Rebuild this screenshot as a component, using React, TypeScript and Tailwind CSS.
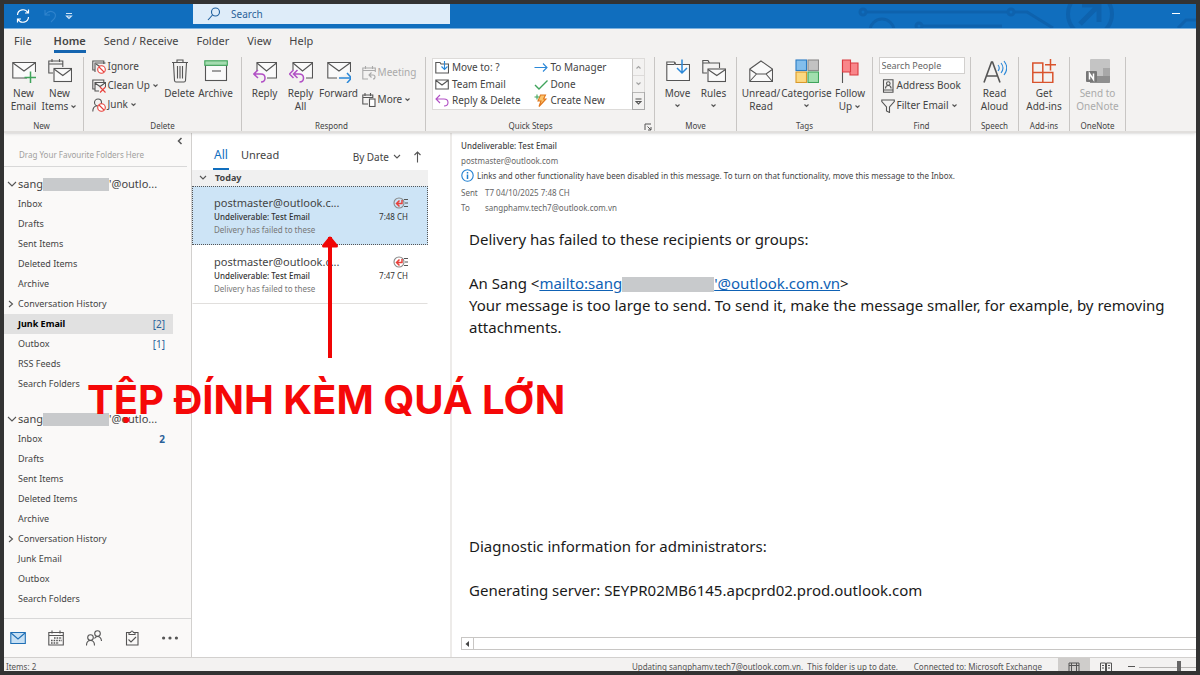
import type { ReactNode } from 'react';

function Svg({ w = 24, h = 24, children, className = '' }: { w?: number; h?: number; children: ReactNode; className?: string }) {
  return (
    <svg width={w} height={h} viewBox={`0 0 ${w} ${h}`} fill="none" stroke="#555" strokeWidth="1.1" className={`shrink-0 ${className}`} aria-hidden="true">
      {children}
    </svg>
  );
}

function Chevron({ className = '' }: { className?: string }) {
  return (
    <Svg w={7} h={6} className={className}>
      <path d="M1.500 1.500l2 2 2-2" />
    </Svg>
  );
}

const purple = '#b14fc5';
const blue = '#2b88d8';
const red = '#e8403a';
const green = '#3fa45b';

const icons = {
  newEmail: (
    <Svg>
      <path d="M15 19H.8V3.500h22.700V13" fill="#fafafa" />
      <path d="M1 4l11 8 11-8" />
      <path d="M18.500 12.500v12M12.500 18.500h12" stroke={green} strokeWidth="1.500" />
    </Svg>
  ),
  newItems: (
    <Svg>
      <path d="M5 14H.8V2h14v6M.8 5h14M4 0v3M11.500 0v3" />
      <rect x="6" y="9.500" width="17.500" height="13" fill="#fafafa" />
      <path d="M6 10l8.800 6.500 8.700-6.500" />
    </Svg>
  ),
  trash: (
    <Svg>
      <path d="M4 3.500h16M9 3.500V1h6v2.500M5.500 4l1 17.500q.2 1.500 1.500 1.500h8q1.300 0 1.500-1.500l1-17.500M9.500 7v12.500M12 7v12.500M14.500 7v12.500" />
    </Svg>
  ),
  archive: (
    <Svg>
      <rect x="1.500" y="6" width="21" height="15.500" fill="#fafafa" />
      <rect x=".8" y="1.800" width="22.500" height="4.500" fill="#a5dcb0" stroke={green} />
      <path d="M8 12h9" />
    </Svg>
  ),
  reply: (
    <Svg>
      <path d="M4 12V3.500h19.500V19H14" fill="#fafafa" />
      <path d="M4 4l9.500 8 10-8" />
      <path d="M5 11 .8 15 5 19M1 15h7q4 0 4 4t-4 4" stroke={purple} strokeWidth="1.500" />
    </Svg>
  ),
  replyAll: (
    <Svg>
      <path d="M4 11V3.500h19.500V19H17" fill="#fafafa" />
      <path d="M4 4l9.500 8 10-8" />
      <path d="M4.500 11 .5 15l4 4M8.500 11l-4 4 4 4M5 15h5q4.500 0 4.500 4t-4 4" stroke={purple} strokeWidth="1.500" />
    </Svg>
  ),
  forward: (
    <Svg>
      <path d="M10 19H.8V3.500h22.700V13" fill="#fafafa" />
      <path d="M1 4l11 8 11-8" />
      <path d="M12 19h12M20 14l4.500 5-4.500 5" stroke={blue} strokeWidth="1.500" />
    </Svg>
  ),
  move: (
    <Svg>
      <path d="M.8 21.500V3h7.500l1.500 2.500h13.700v16z" fill="#fafafa" />
      <path d="M1 5.500h7l1.500-2" />
      <path d="M16 .5v13M11 9l5 5 5-5" stroke={blue} strokeWidth="1.500" />
    </Svg>
  ),
  rules: (
    <Svg>
      <path d="M5 14H.8V1.500H6L7.500 4h10v5M1 4h6.500" />
      <rect x="6" y="10" width="17.500" height="12.500" fill="#fafafa" />
      <path d="M6 10.500l8.800 6 8.700-6" />
    </Svg>
  ),
  unread: (
    <Svg>
      <path d="M.8 10 12 2l11.500 8v12.500H.8z" fill="#fafafa" />
      <path d="M1 10.500 7.500 15h9.500l6.300-4.500M1 22l6.500-7M23 22l-6-7" />
    </Svg>
  ),
  categorise: (
    <Svg>
      <rect x="1" y="1" width="10.500" height="10.500" fill="#83beec" stroke="#2b7cc4" />
      <rect x="13" y="1" width="10.500" height="10.500" fill="#c2c2c2" stroke="#8b8b8b" />
      <rect x="1" y="13" width="10.500" height="10.500" fill="#fcd981" stroke="#d99a2b" />
      <rect x="13" y="13" width="10.500" height="10.500" fill="#a1dfae" stroke={green} />
    </Svg>
  ),
  flag: (
    <Svg>
      <path d="M4.500 1v23" />
      <path d="M4.500 1h8v3h7.500v12h-8v-3H4.500z" fill="#f9868a" stroke="#d93a40" />
      <path d="M12.500 4v9" stroke="#d93a40" />
    </Svg>
  ),
  readAloud: (
    <Svg>
      <path d="M1 23.500 8.500 3h1L17 23.500M4 17h10" strokeWidth="1.600" />
      <path d="M15 6q2.500 3 0 6M18 4q4 5 0 10M21 2q5.500 7 0 14" stroke={blue} />
    </Svg>
  ),
  addins: (
    <Svg>
      <path d="M.8 4h10v19.500H.8zM.8 13.500h20v10H.8M10.800 13.500v10" stroke="#d9532c" strokeWidth="1.500" />
      <path d="M18.500 0v11.500M13 5.800h11" stroke="#d9532c" strokeWidth="1.500" />
    </Svg>
  ),
  oneNote: (
    <Svg>
      <rect x="4" y="0" width="20" height="24" rx="1" fill="#c4c4c4" stroke="none" />
      <path d="M17 9h7v8h-7z" fill="#a8a8a8" stroke="none" />
      <path d="M4 17h20v6q0 1-1 1H4z" fill="#8f8f8f" stroke="none" />
      <rect x="0" y="12" width="11" height="11" rx="1" fill="#777" stroke="none" />
      <path d="M3.500 20.500v-6l4 6v-6" stroke="#fff" strokeWidth="1.500" />
    </Svg>
  ),
  ignore: (
    <Svg w={14} h={14}>
      <path d="M3 10H.8V1h11v3M3 12V3h10.500" />
      <path d="M4 4l4.500 3" />
      <circle cx="9.500" cy="9.500" r="3.800" fill="#fff" stroke={red} />
      <path d="M7 7l5 5" stroke={red} />
    </Svg>
  ),
  cleanUp: (
    <Svg w={14} h={14}>
      <path d="M3 10H.8V1h11v2M7 12H3V3.500h10.500V8M3 4l5 3.500L13 4" />
      <path d="M8 8l5.500 5.500M13.500 8 8 13.500" stroke={red} />
    </Svg>
  ),
  junk: (
    <Svg w={14} h={14}>
      <circle cx="6" cy="4.500" r="3.500" />
      <path d="M.8 13.500q0-5 4-5.700" />
      <circle cx="9.500" cy="9.500" r="3.800" fill="#fff" stroke={red} />
      <path d="M7 7l5 5" stroke={red} />
    </Svg>
  ),
  meeting: (
    <Svg w={14} h={14}>
      <g stroke="#aaa">
        <path d="M6 13H.8V2h12.500v4M.8 4.500h12.500M3.500 0v3M10.500 0v3" />
        <path d="M9.500 6.500 7 9l2.500 2.500M7 9h4q2 0 2 2t-2 2" />
      </g>
    </Svg>
  ),
  more: (
    <Svg w={14} h={14}>
      <path d="M6 11H.8V2h10v3M.8 4.500h10M3 0v3M8.500 0v3" />
      <rect x="7.500" y="6" width="5.500" height="7.500" fill="#fff" />
    </Svg>
  ),
  moveTo: (
    <Svg w={14} h={13}>
      <path d="M.8 12V1.500H5L6 3h7.500v9z" />
      <path d="M9.500 0v8M6.500 5.500l3 3 3-3" stroke={blue} />
    </Svg>
  ),
  envelope: (
    <Svg w={14} h={13}>
      <path d="M.8 2h12.500v9H.8zM1 2.500 7 7l6-4.500" />
    </Svg>
  ),
  replyDelete: (
    <Svg w={14} h={13}>
      <path d="M5 1 1 5l4 4M1 5h8q4 0 4 3.500T9 12" stroke={purple} />
    </Svg>
  ),
  arrowRight: (
    <Svg w={14} h={13}>
      <path d="M.5 6.500h12.500M9 2.500l4 4-4 4" stroke={blue} />
    </Svg>
  ),
  check: (
    <Svg w={14} h={13}>
      <path d="M1 7l4 4 8.500-8.500" stroke={green} strokeWidth="1.400" />
    </Svg>
  ),
  bolt: (
    <Svg w={14} h={13}>
      <path d="M6.500 1h5L9.500 5H12l-7 7.500 2-5.500H4z" fill="#fcc46b" stroke="#e0761c" />
      <path d="M3 .5v5M.5 3h5" stroke={green} />
    </Svg>
  ),
  addressBook: (
    <Svg w={14} h={14}>
      <path d="M2.500.8h9.500v12.500h-9.500zM2.500 11h9.500" />
      <circle cx="7.300" cy="4.500" r="1.800" />
      <path d="M4.500 9.500q0-3 2.800-3t2.800 3" />
    </Svg>
  ),
  filter: (
    <Svg w={14} h={14}>
      <path d="M.8 1h12.500v1.500L8.500 8v5.500L5.500 12V8L.8 2.500z" />
    </Svg>
  ),
};

function BigButton({ icon, label, second, caret, width, disabled }: { icon: ReactNode; label: string; second?: string; caret?: boolean; width: string; disabled?: boolean }) {
  return (
    <button type="button" disabled={disabled} className={`${width} flex shrink-0 flex-col items-center whitespace-nowrap pt-[2px] leading-[13px] disabled:text-[#aaa]`}>
      <span className="mb-1">{icon}</span>
      <span>{label}</span>
      <span className="flex min-h-3 items-center gap-[2px]">
        {second}
        {caret && <Chevron />}
      </span>
    </button>
  );
}

function SmallButton({ icon, label, caret, disabled }: { icon: ReactNode; label: string; caret?: boolean; disabled?: boolean }) {
  return (
    <button type="button" disabled={disabled} className="flex h-[19px] items-center gap-[2px] whitespace-nowrap disabled:text-[#aaa]">
      {icon}
      {label}
      {caret && <Chevron />}
    </button>
  );
}

function Group({ name, width, children, launcher }: { name: string; width: string; children: ReactNode; launcher?: boolean }) {
  return (
    <section aria-label={name} className={`${width} relative flex shrink-0 flex-col border-r border-[#c8c6c4]`}>
      <div className="flex flex-1 justify-center">{children}</div>
      <div className={`text-center text-[8px] leading-[10px] ${launcher ? 'pr-4' : ''}`}>{name}</div>
      {launcher && (
        <button type="button" aria-label="Manage quick steps" className="absolute bottom-0 right-[2px]">
          <Svg w={8} h={8}>
            <path d="M1 7V1h6M3.500 3.500 7 7M7 4v3H4" strokeWidth="1" />
          </Svg>
        </button>
      )}
    </section>
  );
}

function TitleBar() {
  return (
    <header className="relative flex h-[25px] border-b border-[#7db4e3] bg-[#106ebe]">
      <div className="flex w-[189px] items-center pl-3">
        <button type="button" aria-label="Send/Receive all folders">
          <Svg w={14} h={14}>
            <path d="M1.500 6a5.500 5.500 0 0 1 10.500-2M12.500.5V4H9M12.500 8a5.500 5.500 0 0 1-10.500 2M1.500 13.500V10H5" stroke="#fff" strokeWidth="1.200" />
          </Svg>
        </button>
        <button type="button" aria-label="Undo" className="ml-[13px]">
          <Svg w={14} h={14}>
            <path d="M2 1v5h5M2 6q4-5 8-3t1.500 6.500L8 13" stroke="#2f83cc" />
          </Svg>
        </button>
        <button type="button" aria-label="Customise toolbar" className="ml-2">
          <Svg w={8} h={8}>
            <path d="M1 1.500h6M1.500 4 4 6.500 6.500 4z" stroke="#cfe3f5" />
          </Svg>
        </button>
      </div>
      <label className="flex h-5 w-[257px] items-center gap-[10px] bg-[#deecf9] pl-[14px] text-[#1f5f9e]">
        <Svg w={14} h={14}>
          <circle cx="8.500" cy="5" r="4" stroke="#1f5f9e" />
          <path d="M5.500 8 1 13" stroke="#1f5f9e" />
        </Svg>
        <input type="text" aria-label="Search" placeholder="Search" className="w-40 bg-transparent text-[10px] outline-none placeholder:text-[#2b6299]" />
      </label>
      <div className="flex flex-1 justify-end overflow-hidden">
        <Svg w={340} h={24}>
          <g stroke="#0e62ad" strokeWidth="3">
            <path d="M10 8h142M158 8h13l26 16M66 22h80" />
            <circle cx="7" cy="8" r="3" />
            <circle cx="155" cy="8" r="3" />
            <circle cx="63" cy="22" r="3" />
            <circle cx="26" cy="27" r="12" />
            <circle cx="234" cy="10" r="22" strokeWidth="4" />
            <path d="M224 20l18-18M226 1h17v17" strokeWidth="5" />
            <path d="M322 24l8-8h12" />
          </g>
        </Svg>
      </div>
      <button type="button" aria-label="Minimise" className="absolute right-4 top-[9px] h-px w-2 bg-white" />
    </header>
  );
}

const menu = ['File', 'Home', 'Send / Receive', 'Folder', 'View', 'Help'];

const quickSteps = [
  { icon: icons.moveTo, label: 'Move to: ?' },
  { icon: icons.arrowRight, label: 'To Manager' },
  { icon: icons.envelope, label: 'Team Email' },
  { icon: icons.check, label: 'Done' },
  { icon: icons.replyDelete, label: 'Reply & Delete' },
  { icon: icons.bolt, label: 'Create New' },
];

function Ribbon() {
  return (
    <div className="relative border-b-2 border-[#e1dfdd] bg-[#f3f2f1] shadow-sm">
      <nav className="flex h-6 gap-[18px] overflow-hidden pl-[10px] pt-1 text-[11px] leading-4">
        {menu.map((item) => (
          <a key={item} href={`#${item}`} className={item === 'Home' ? 'ml-1 border-b-[3px] border-[#1565b0] font-semibold' : ''}>
            {item}
          </a>
        ))}
      </nav>
      <div className="mt-1 flex h-[74px] overflow-hidden text-[10px]">
        <Group name="New" width="w-[80px] pr-1">
          <BigButton icon={icons.newEmail} label="New" second="Email" width="w-9" />
          <BigButton icon={icons.newItems} label="New" second="Items" caret width="w-9" />
        </Group>
        <Group name="Delete" width="w-[158px]">
          <div className="w-[70px]">
            <SmallButton icon={icons.ignore} label="Ignore" />
            <SmallButton icon={icons.cleanUp} label="Clean Up" caret />
            <SmallButton icon={icons.junk} label="Junk" caret />
          </div>
          <BigButton icon={icons.trash} label="Delete" width="w-9" />
          <BigButton icon={icons.archive} label="Archive" width="w-9" />
        </Group>
        <Group name="Respond" width="w-[184px] pr-1">
          <BigButton icon={icons.reply} label="Reply" width="w-9" />
          <BigButton icon={icons.replyAll} label="Reply" second="All" width="w-9" />
          <BigButton icon={icons.forward} label="Forward" width="w-10" />
          <div className="flex flex-col gap-2 pl-[3px] pt-[6px]">
            <SmallButton icon={icons.meeting} label="Meeting" disabled />
            <SmallButton icon={icons.more} label="More" caret />
          </div>
        </Group>
        <Group name="Quick Steps" width="w-[229px] pr-[3px]" launcher>
          <div className="mt-px flex h-[52px] border border-[#dddbd9] bg-white">
            <div className="grid w-[199px] grid-cols-2 pl-[2px]">
              {quickSteps.map((step) => (
                <button key={step.label} type="button" className="flex h-4 items-center gap-[3px] whitespace-nowrap pt-px">
                  {step.icon}
                  {step.label}
                </button>
              ))}
            </div>
            <div className="flex w-3 flex-col divide-y divide-[#c8c6c4] border-l border-[#c8c6c4] bg-[#f3f2f1]">
              <button type="button" aria-label="Previous row" className="flex flex-1 items-center justify-center opacity-50">
                <Chevron className="rotate-180" />
              </button>
              <button type="button" aria-label="Next row" className="flex flex-1 items-center justify-center opacity-50">
                <Chevron />
              </button>
              <button type="button" aria-label="More steps" className="flex flex-1 items-center justify-center outline outline-[#aaa]">
                <Svg w={7} h={7}>
                  <path d="M.5 1h6M1 3.500h5L3.500 6z" />
                </Svg>
              </button>
            </div>
          </div>
        </Group>
        <Group name="Move" width="w-[82px]">
          <BigButton icon={icons.move} label="Move" caret width="w-9" />
          <BigButton icon={icons.rules} label="Rules" caret width="w-9" />
        </Group>
        <Group name="Tags" width="w-[136px]">
          <BigButton icon={icons.unread} label="Unread/" second="Read" width="w-10" />
          <BigButton icon={icons.categorise} label="Categorise" caret width="w-[51px]" />
          <BigButton icon={icons.flag} label="Follow" second="Up" caret width="w-9" />
        </Group>
        <Group name="Find" width="w-[98px]">
          <div className="flex w-[86px] flex-col">
            <input type="text" aria-label="Search People" placeholder="Search People" className="h-[17px] w-full border border-[#d2d0ce] bg-white px-[2px] text-[9px] placeholder:text-[#666]" />
            <div className="flex flex-col gap-px pl-[2px] pt-[2px]">
              <SmallButton icon={icons.addressBook} label="Address Book" />
              <SmallButton icon={icons.filter} label="Filter Email" caret />
            </div>
          </div>
        </Group>
        <Group name="Speech" width="w-12">
          <BigButton icon={icons.readAloud} label="Read" second="Aloud" width="w-10" />
        </Group>
        <Group name="Add-ins" width="w-[51px]">
          <BigButton icon={icons.addins} label="Get" second="Add-ins" width="w-10" />
        </Group>
        <Group name="OneNote" width="w-[56px]">
          <BigButton icon={icons.oneNote} label="Send to" second="OneNote" width="w-10" disabled />
        </Group>
      </div>
    </div>
  );
}

interface Folder {
  name: string;
  count?: string;
  active?: boolean;
}

const firstAccount: Folder[] = [
  { name: 'Inbox' },
  { name: 'Drafts' },
  { name: 'Sent Items' },
  { name: 'Deleted Items' },
  { name: 'Archive' },
  { name: 'Conversation History' },
  { name: 'Junk Email', count: '[2]', active: true },
  { name: 'Outbox', count: '[1]' },
  { name: 'RSS Feeds' },
  { name: 'Search Folders' },
];

const secondAccount: Folder[] = [
  { name: 'Inbox', count: '2' },
  { name: 'Drafts' },
  { name: 'Sent Items' },
  { name: 'Deleted Items' },
  { name: 'Archive' },
  { name: 'Conversation History' },
  { name: 'Junk Email' },
  { name: 'Outbox' },
  { name: 'Search Folders' },
];

function Account({ folders, hint }: { folders: Folder[]; hint: string }) {
  return (
    <section>
      <button type="button" className="flex h-5 w-full items-center pl-[3px] text-[11px]">
        <Svg w={10} h={8} className="mr-px">
          <path d="M1 2l4 4 4-4" />
        </Svg>
        sang
        <span className="h-[13px] w-[66px] bg-[#c8cacc]" />
        {hint}@outlo...
      </button>
      <ul>
        {folders.map((folder) => (
          <li key={folder.name}>
            <a
              href={`#${folder.name}`}
              className={`mr-[18px] flex h-5 items-center pr-2 ${folder.active ? 'bg-[#e1e1e1] font-bold text-black' : ''}`}
            >
              <span className="flex w-[14px] shrink-0 justify-center pr-px">
                {folder.name === 'Conversation History' && (
                  <Svg w={6} h={8}>
                    <path d="M1 1l3.500 3L1 7" />
                  </Svg>
                )}
              </span>
              {folder.name}
              {folder.count && (
                <span className={`ml-auto text-[10px] text-[#2b6299] ${folder.count === '2' ? 'font-bold' : 'font-normal'}`}>{folder.count}</span>
              )}
            </a>
          </li>
        ))}
      </ul>
    </section>
  );
}

function Sidebar() {
  return (
    <aside className="flex w-[188px] shrink-0 flex-col border-r border-[#d2d0ce] bg-[#faf9f8] text-[9px]">
      <div className="relative mr-1 border-b border-[#d8d8d8] px-[15px] pb-1 pt-[15px] text-[8px] leading-[14px] text-[#a19f9d]">
        <button type="button" aria-label="Minimise the folder pane" className="absolute right-1 top-1">
          <Svg w={6} h={8}>
            <path d="M4.500 1 1.500 4l3 3" strokeWidth="1.500" />
          </Svg>
        </button>
        <span className="whitespace-nowrap">Drag Your Favourite Folders Here</span>
      </div>
      <div className="flex flex-col gap-[15px] pt-[7px]">
        <Account folders={firstAccount} hint="'" />
        <Account folders={secondAccount} hint="'" />
      </div>
      <nav className="mt-auto flex h-[39px] items-center gap-[22px] border-t border-[#d8d8d8] pl-[6px]">
        <a href="#mail" aria-label="Mail">
          <Svg w={16} h={16}>
            <path d="M.8 2.500h14.500v11H.8z" fill="#c7e0f4" stroke="#1f6fb5" />
            <path d="M1 3 8 9l7-6" stroke="#1f6fb5" />
          </Svg>
        </a>
        <a href="#calendar" aria-label="Calendar">
          <Svg w={16} h={16}>
            <path d="M.8 2.500h14.500v12.500H.8zM.8 5.500h14.500M4 .5v3M12 .5v3" />
            <path d="M6 8h8M3 10.500h11M3 13h8" strokeWidth="1.600" strokeDasharray="1.600 1" />
          </Svg>
        </a>
        <a href="#people" aria-label="People">
          <Svg w={16} h={16}>
            <circle cx="4.500" cy="7.500" r="2.800" />
            <circle cx="11.500" cy="3.500" r="2.800" />
            <path d="M.5 15.500q0-5 4-5t4 5M8.500 8.500q1-2 3-2 3.500 0 4 4.500" />
          </Svg>
        </a>
        <a href="#tasks" aria-label="Tasks">
          <Svg w={16} h={16}>
            <path d="M5 2.500H2.500v12.500h11.500V2.500H11M5 4.500v-2h1.500q1.500-3 3 0H11v2zM4.500 9.500l2.500 2.500 5-5" />
          </Svg>
        </a>
        <button type="button" aria-label="More">
          <Svg w={16} h={16}>
            <g fill="#555" stroke="none">
              <circle cx="1.600" cy="8" r="1.600" />
              <circle cx="8" cy="8" r="1.600" />
              <circle cx="14.400" cy="8" r="1.600" />
            </g>
          </Svg>
        </button>
      </nav>
    </aside>
  );
}

const messages = [
  { time: '7:48 CH', selected: true },
  { time: '7:47 CH', selected: false },
];

function MessageList() {
  return (
    <section className="w-[260px] shrink-0 border-r-2 border-[#edebe9] bg-white pr-[22px]">
      <div className="flex h-[37px] items-end text-[12px] leading-4">
        <button type="button" className="ml-[21px] border-b-2 border-[#106ebe] px-px pb-[5px] text-[#106ebe]">
          All
        </button>
        <button type="button" className="ml-3 pb-[7px] text-[11px]">
          Unread
        </button>
        <button type="button" className="ml-auto flex items-center gap-1 pb-[5px] text-[10px]">
          By Date
          <Svg w={8} h={6}>
            <path d="M1 1l3 3 3-3" />
          </Svg>
        </button>
        <button type="button" aria-label="Sort ascending" className="ml-3 mr-[6px] pb-[7px]">
          <Svg w={9} h={12}>
            <path d="M4.500 11.500V1M1.500 4l3-3 3 3" />
          </Svg>
        </button>
      </div>
      <button type="button" className="flex h-4 w-full items-center gap-2 bg-[#f0f0f0] pl-[7px] text-[9px] font-bold">
        <Svg w={8} h={6}>
          <path d="M1 1l3 3 3-3" />
        </Svg>
        Today
      </button>
      <ul>
        {messages.map((m) => (
          <li
            key={m.time}
            className={`h-[59px] border pl-[21px] pr-[19px] pt-2 text-[8px] ${
              m.selected ? 'border-dotted border-[#555] bg-[#cde4f6]' : 'border-transparent border-b-[#e1dfdd]'
            }`}
          >
            <div className="flex items-center justify-between text-[11px] leading-4">
              postmaster@outlook.c...
              <Svg w={15} h={12}>
                <circle cx="6" cy="6" r="5" stroke="#888" />
                <path d="M9 3v3.500H4M6.500 3.500 3.500 6.500l3 3" stroke={red} strokeWidth="1.500" />
                <path d="M11 2.500h4M12 6h3M11 9.500h4" />
              </Svg>
            </div>
            <div className="flex justify-between leading-3 text-[#333]">
              <span className="font-medium">Undeliverable: Test Email</span>
              <span>{m.time}</span>
            </div>
            <p className="leading-[13px] text-[#777]">Delivery has failed to these</p>
          </li>
        ))}
      </ul>
    </section>
  );
}

function ReadingPane() {
  return (
    <main className="flex min-w-0 flex-1 flex-col bg-white pl-[9px] pt-[5px]">
      <header className="text-[8px] leading-[15px] text-[#666]">
        <h1 className="font-medium text-[#444]">Undeliverable: Test Email</h1>
        <p>postmaster@outlook.com</p>
        <p className="flex items-center gap-[3px] whitespace-nowrap text-[#444]">
          <Svg w={13} h={13}>
            <circle cx="6.500" cy="6.500" r="5.700" stroke="#1f7fd0" />
            <path d="M6.500 3v1.500M6.500 5.500v4.500" stroke="#1f7fd0" strokeWidth="1.500" />
          </Svg>
          Links and other functionality have been disabled in this message. To turn on that functionality, move this message to the Inbox.
        </p>
        <dl className="grid grid-cols-[24px_1fr] pt-[2px]">
          <dt>Sent</dt>
          <dd>T7 04/10/2025 7:48 CH</dd>
          <dt>To</dt>
          <dd>sangphamv.tech7@outlook.com.vn</dd>
        </dl>
      </header>
      <article className="pl-2 pt-[13px] text-[15px] leading-[22px] text-[#1a1a1a]">
        <p>Delivery has failed to these recipients or groups:</p>
        <p className="pt-[22px]">
          An Sang &lt;
          <a href="#mailto" className="text-[#0f62b5] underline">
            mailto:sang
            <span className="inline-block h-[15px] w-[92px] bg-[#c8cacc] align-[-3px]" />
            '@outlook.com.vn
          </a>
          &gt;
        </p>
        <p>Your message is too large to send. To send it, make the message smaller, for example, by removing attachments.</p>
        <p className="pt-[197px]">Diagnostic information for administrators:</p>
        <p className="pt-[22px]">Generating server: SEYPR02MB6145.apcprd02.prod.outlook.com</p>
      </article>
      <div className="mb-[7px] mt-auto flex h-[13px] border-y border-[#c8c6c4]">
        <button type="button" aria-label="Scroll left" className="flex w-[13px] items-center justify-center border-x border-[#c8c6c4]">
          <Svg w={5} h={6}>
            <path d="M4 0v6L.5 3z" fill="#444" stroke="none" />
          </Svg>
        </button>
      </div>
    </main>
  );
}

function StatusBar() {
  return (
    <footer className="flex h-[14px] items-start overflow-hidden border-t border-[#d2d0ce] bg-[#f3f2f1] pl-[2px] text-[8px] leading-[18px] text-[#555]">
      <span>Items: 2</span>
      <span className="ml-auto whitespace-pre">Updating sangphamv.tech7@outlook.com.vn.  This folder is up to date.</span>
      <span className="ml-4">Connected to: Microsoft Exchange</span>
      <button type="button" aria-label="Normal view" className="ml-4 flex h-[18px] w-8 items-center justify-center bg-[#cfcdcb]">
        <Svg w={12} h={10}>
          <path d="M1 1h10v9M1 1v9M3.500 1v9M8.500 1v9M1 3.500h10" strokeWidth="1" />
        </Svg>
      </button>
      <button type="button" aria-label="Reading view" className="ml-[10px] flex h-[18px] items-center">
        <Svg w={12} h={10}>
          <path d="M.5 1h5v9M11.500 1h-5v9M.5 1v9h11V1M2 3.500h2M2 6h2M8 3.500h2M8 6h2" strokeWidth="1" />
        </Svg>
      </button>
      <button type="button" aria-label="Zoom out" className="ml-4 mt-2 h-px w-[7px] bg-[#555]" />
      <input
        type="range"
        aria-label="Zoom"
        defaultValue={72}
        className="ml-1 mt-[3px] h-3 w-[57px] appearance-none bg-transparent [&::-webkit-slider-runnable-track]:bg-[linear-gradient(#b5b3b1,#b5b3b1)] [&::-webkit-slider-runnable-track]:bg-[length:100%_1px] [&::-webkit-slider-runnable-track]:bg-no-repeat [&::-webkit-slider-runnable-track]:bg-center [&::-webkit-slider-thumb]:h-3 [&::-webkit-slider-thumb]:w-1 [&::-webkit-slider-thumb]:appearance-none [&::-webkit-slider-thumb]:bg-[#666]"
      />
    </footer>
  );
}

export default function App() {
  return (
    <div className="relative flex min-h-screen flex-col overflow-hidden border-4 border-[#333] bg-white font-['Noto_Sans','Open_Sans',sans-serif] text-[#444]">
      <TitleBar />
      <Ribbon />
      <div className="flex flex-1">
        <Sidebar />
        <MessageList />
        <ReadingPane />
      </div>
      <StatusBar />

      {/* callout over the window */}
      <svg width="18" height="124" viewBox="0 0 18 124" className="absolute left-[317px] top-[231px]" aria-hidden="true">
        <path d="M9 2v121" stroke="#f00505" strokeWidth="4" />
        <path d="M9 3 2.500 11h13z" fill="#f00505" stroke="#f00505" strokeWidth="3" strokeLinejoin="round" />
      </svg>
      <p className="absolute left-[83px] top-[372px] whitespace-nowrap font-['Inter',sans-serif] text-[40px] font-bold leading-[48px] text-[#f50808]">
        TỆP ĐÍNH KÈM QUÁ LỚN
      </p>
    </div>
  );
}
